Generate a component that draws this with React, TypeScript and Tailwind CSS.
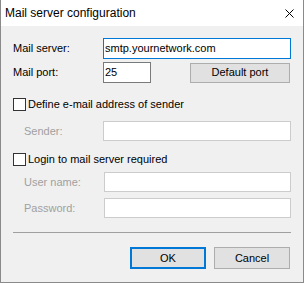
import React from 'react';

const Checkbox: React.FC<{ label: string }> = ({ label }) => (
  <div className="flex h-[13px] items-center">
    <span className="h-[13px] w-[13px] border border-[#333333] bg-white" />
    <span className="ml-[2px] text-black">{label}</span>
  </div>
);

const Field: React.FC<{ label: string; value?: string; disabled?: boolean; focused?: boolean; width?: string; labelClass?: string }> = ({
  label,
  value = '',
  disabled = false,
  focused = false,
  width = 'w-[188px]',
  labelClass = 'w-[90px]'
}) => (
  <div className="flex items-center">
    <span className={`${labelClass} ${disabled ? 'pl-[11px] text-[#a0a0a0]' : 'text-black'}`}>{label}</span>
    <div
      className={`${width} ${disabled ? 'h-[20px] border-[#cccccc]' : 'h-[21px]'} ${
        focused ? 'border-[#0078d7]' : disabled ? '' : 'border-[#7a7a7a]'
      } flex items-center border bg-white pl-[1px] text-black`}
    >
      {value}
    </div>
  </div>
);

export default function App() {
  return (
    <div className="h-[283px] w-[304px] border border-t-0 border-[#8a8a8a] bg-[#f0f0f0] font-['Liberation_Sans',Arial,sans-serif] text-[11px] leading-none">
      {/* Title bar */}
      <div className="flex h-[26px] items-center bg-white pl-[4px] pr-[9px]">
        <span className="text-[12px] text-black">Mail server configuration</span>
        <svg className="ml-auto" width="9" height="9" viewBox="0 0 9 9">
          <path d="M0.5 0.5 L8.5 8.5 M8.5 0.5 L0.5 8.5" stroke="#000" strokeWidth="1" />
        </svg>
      </div>

      <div className="flex flex-col pl-[12px] pt-[12px]">
        <Field label="Mail server:" value="smtp.yournetwork.com" focused />

        <div className="mt-[3px] flex items-center">
          <Field label="Mail port:" value="25" width="w-[48px]" />
          <button className="ml-[39px] h-[20px] w-[100px] border border-[#adadad] bg-[#e1e1e1] text-black">
            Default port
          </button>
        </div>

        <div className="mt-[15px]">
          <Checkbox label="Define e-mail address of sender" />
        </div>
        <div className="mt-[10px]">
          <Field label="Sender:" disabled />
        </div>

        <div className="mt-[12px]">
          <Checkbox label="Login to mail server required" />
        </div>
        <div className="mt-[6px]">
          <Field label="User name:" disabled labelClass="w-[91px]" width="w-[187px]" />
        </div>
        <div className="mt-[6px]">
          <Field label="Password:" disabled labelClass="w-[91px]" width="w-[187px]" />
        </div>

        <div className="mt-[14px] h-px w-[278px] bg-[#a0a0a0]" />

        <div className="mt-[14px] flex w-[277px] justify-end gap-[8px]">
          <button className="h-[22px] w-[76px] border-2 border-[#0078d7] bg-[#e1e1e1] text-black">OK</button>
          <button className="h-[22px] w-[76px] border border-[#adadad] bg-[#e1e1e1] text-black">Cancel</button>
        </div>
      </div>
    </div>
  );
}
